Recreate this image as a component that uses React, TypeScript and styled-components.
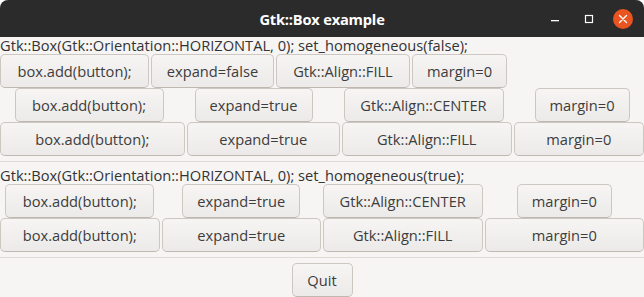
import React from "react";
import styled, { createGlobalStyle } from "styled-components";

const GlobalStyle = createGlobalStyle`
  html, body {
    margin: 0;
    padding: 0;
    background: #ffffff;
  }
  * {
    box-sizing: border-box;
  }
`;

// natural widths of the gtk buttons (what gtk would size them to)
const naturalWidth: Record<string, number> = {
  "box.add(button);": 149,
  "expand=false": 123,
  "expand=true": 118,
  "Gtk::Align::FILL": 134,
  "Gtk::Align::CENTER": 160,
  "margin=0": 95,
  Quit: 61,
};

interface RowSpec {
  expand: boolean;
  fill: boolean;
}

interface SectionSpec {
  homogeneous: boolean;
  rows: RowSpec[];
}

const sections: SectionSpec[] = [
  {
    homogeneous: false,
    rows: [
      { expand: false, fill: true },
      { expand: true, fill: false },
      { expand: true, fill: true },
    ],
  },
  {
    homogeneous: true,
    rows: [
      { expand: true, fill: false },
      { expand: true, fill: true },
    ],
  },
];

const Window = styled.div`
  width: 644px;
  height: 297px;
  overflow: hidden;
  background: #f6f5f4;
  border-radius: 8px 8px 0 0;
  font-family: "Open Sans", "Noto Sans", sans-serif;
  font-size: 14.67px;
  color: #3d3d3d;
  display: flex;
  flex-direction: column;
`;

const TitleBar = styled.div`
  height: 37px;
  flex: 0 0 37px;
  background: #2c2b2b;
  display: grid;
  grid-template-columns: 1fr auto 1fr;
  align-items: center;
`;

const Title = styled.div`
  grid-column: 2;
  color: #ffffff;
  font-weight: 700;
  font-size: 14.67px;
  letter-spacing: -0.2px;
`;

const Controls = styled.div`
  grid-column: 3;
  justify-self: end;
  display: flex;
  align-items: center;
  gap: 14px;
  padding-right: 11px;
`;

const ControlButton = styled.div`
  width: 20px;
  height: 20px;
  display: flex;
  align-items: center;
  justify-content: center;
`;

const CloseButton = styled(ControlButton)`
  border-radius: 50%;
  background: #e95420;
`;

const Caption = styled.div`
  height: 17px;
  line-height: 17px;
  white-space: nowrap;
  color: #333333;
`;

const PackRow = styled.div<{ $homogeneous: boolean }>`
  height: 34px;
  display: ${({ $homogeneous }) => ($homogeneous ? "grid" : "flex")};
  grid-template-columns: repeat(4, minmax(0, 1fr));
  gap: 2px;
`;

const Cell = styled.div<{ $homogeneous: boolean; $expand: boolean; $natural: number }>`
  display: flex;
  justify-content: center;
  min-width: 0;
  flex: ${({ $homogeneous, $expand, $natural }) =>
    $homogeneous ? "none" : $expand ? `1 1 ${$natural}px` : `0 0 ${$natural}px`};
`;

const GtkButton = styled.button<{ $fill: boolean; $natural: number }>`
  width: ${({ $fill, $natural }) => ($fill ? "100%" : `${$natural}px`)};
  height: 34px;
  padding: 0 8px;
  border: 1px solid #cdc7c2;
  border-bottom-color: #bfb8b1;
  border-radius: 5px;
  background: linear-gradient(to top, #edebe9 2px, #f6f5f4);
  font-family: inherit;
  font-size: 14.67px;
  color: #3d3d3d;
  white-space: nowrap;
  overflow: hidden;
`;

const Separator = styled.div`
  height: 1px;
  margin: 5px 0;
  background: #dedad6;
`;

const QuitRow = styled.div`
  display: flex;
  justify-content: center;
`;

const labels = ["box.add(button);", "", "", "margin=0"];

function rowLabels(row: RowSpec) {
  return [
    labels[0],
    row.expand ? "expand=true" : "expand=false",
    row.fill ? "Gtk::Align::FILL" : "Gtk::Align::CENTER",
    labels[3],
  ];
}

const App: React.FC = () => {
  return (
    <>
      <GlobalStyle />
      <Window>
        <TitleBar>
          <Title>Gtk::Box example</Title>
          <Controls>
            <ControlButton>
              <svg width="10" height="10" viewBox="0 0 10 10">
                <rect x="1" y="6" width="8" height="1.3" fill="#ffffff" />
              </svg>
            </ControlButton>
            <ControlButton>
              <svg width="10" height="10" viewBox="0 0 10 10">
                <rect x="1.5" y="1.5" width="7" height="7" fill="none" stroke="#ffffff" strokeWidth="1.2" />
              </svg>
            </ControlButton>
            <CloseButton>
              <svg width="10" height="10" viewBox="0 0 10 10">
                <path d="M1.5 1.5 L8.5 8.5 M8.5 1.5 L1.5 8.5" stroke="#ffffff" strokeWidth="1.4" strokeLinecap="round" />
              </svg>
            </CloseButton>
          </Controls>
        </TitleBar>

        {sections.map((section, si) => (
          <React.Fragment key={si}>
            {si > 0 && <Separator />}
            <Caption>
              Gtk::Box(Gtk::Orientation::HORIZONTAL, 0); set_homogeneous(
              {section.homogeneous ? "true" : "false"});
            </Caption>
            {section.rows.map((row, ri) => (
              <PackRow key={ri} $homogeneous={section.homogeneous}>
                {rowLabels(row).map((text) => (
                  <Cell
                    key={text}
                    $homogeneous={section.homogeneous}
                    $expand={row.expand}
                    $natural={naturalWidth[text]}
                  >
                    <GtkButton $fill={row.fill} $natural={naturalWidth[text]}>
                      {text}
                    </GtkButton>
                  </Cell>
                ))}
              </PackRow>
            ))}
          </React.Fragment>
        ))}

        <Separator />
        <QuitRow>
          <GtkButton $fill={false} $natural={naturalWidth.Quit}>
            Quit
          </GtkButton>
        </QuitRow>
      </Window>
    </>
  );
};

export default App;
